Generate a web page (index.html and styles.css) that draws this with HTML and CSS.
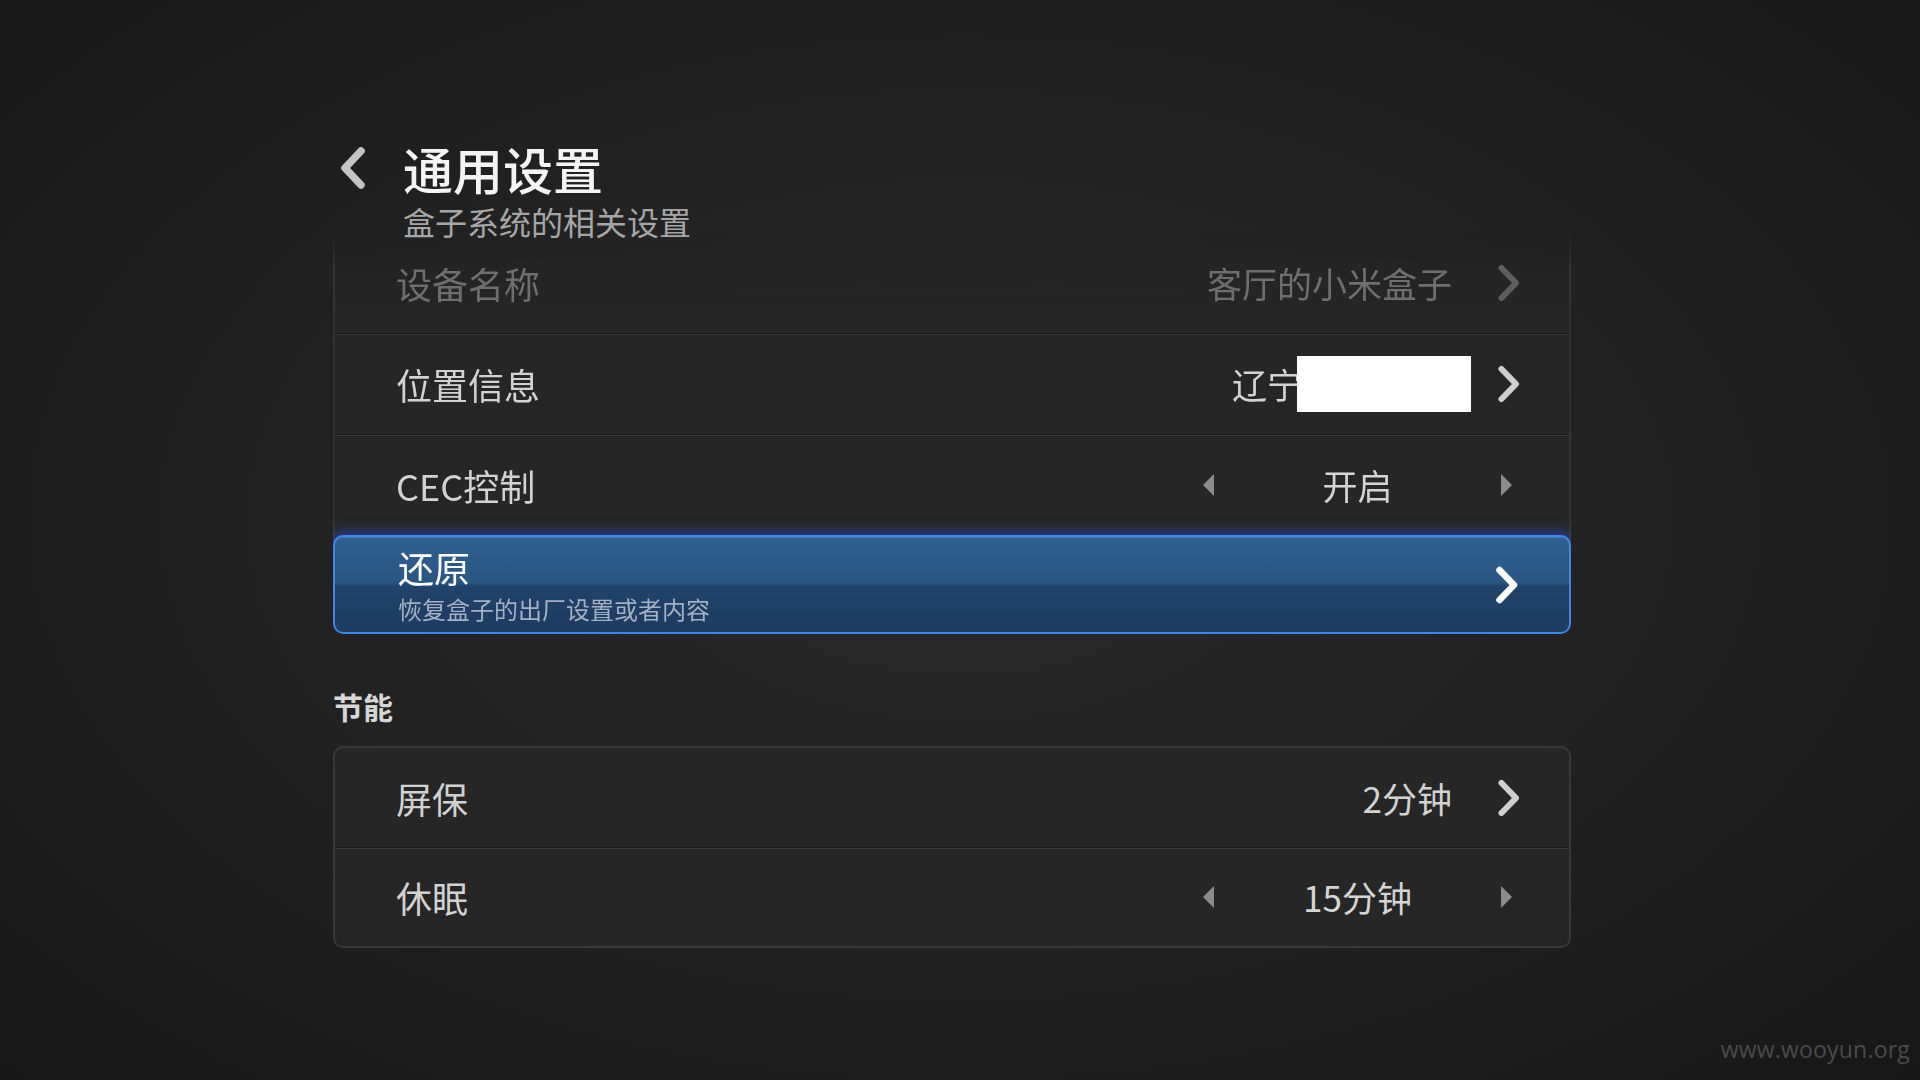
FILE: index.html
```html
<!DOCTYPE html>
<html lang="zh-CN">
<head>
<meta charset="utf-8">
<title>通用设置</title>
<link rel="stylesheet" href="styles.css">
</head>
<body>
<div class="screen">
  <header class="head">
    <svg class="back" viewBox="0 0 28 44" width="28" height="44"><path d="M22 5 L6 22 L22 39" fill="none" stroke="#c4c4c4" stroke-width="7.5" stroke-linecap="round" stroke-linejoin="round"/></svg>
    <div class="titles">
      <h1 class="title">通用设置</h1>
      <p class="subtitle">盒子系统的相关设置</p>
    </div>
  </header>

  <div class="card card-top">
    <div class="row dim">
      <span class="label">设备名称</span>
      <span class="value">客厅的小米盒子</span>
      <svg class="chev" viewBox="0 0 24 38" width="24" height="38"><path d="M4.5 4 L19 19 L4.5 34" fill="none" stroke="currentColor" stroke-width="6" stroke-linecap="round" stroke-linejoin="round"/></svg>
    </div>
    <div class="row">
      <span class="label">位置信息</span>
      <span class="value">辽宁<span class="redact"></span></span>
      <svg class="chev" viewBox="0 0 24 38" width="24" height="38"><path d="M4.5 4 L19 19 L4.5 34" fill="none" stroke="currentColor" stroke-width="6" stroke-linecap="round" stroke-linejoin="round"/></svg>
    </div>
    <div class="row">
      <span class="label">CEC控制</span>
      <div class="picker">
        <svg class="tri" viewBox="0 0 11 22" width="11" height="22"><path d="M11 0 L0 11 L11 22 Z" fill="currentColor"/></svg>
        <span class="pick-val">开启</span>
        <svg class="tri" viewBox="0 0 11 22" width="11" height="22"><path d="M0 0 L11 11 L0 22 Z" fill="currentColor"/></svg>
      </div>
    </div>
    <div class="row active">
      <div class="stack">
        <span class="label">还原</span>
        <span class="hint">恢复盒子的出厂设置或者内容</span>
      </div>
      <svg class="chev" viewBox="0 0 24 38" width="24" height="38"><path d="M4.5 4 L19 19 L4.5 34" fill="none" stroke="currentColor" stroke-width="6.5" stroke-linecap="round" stroke-linejoin="round"/></svg>
    </div>
  </div>

  <h2 class="section">节能</h2>

  <div class="card">
    <div class="row">
      <span class="label">屏保</span>
      <span class="value">2分钟</span>
      <svg class="chev" viewBox="0 0 24 38" width="24" height="38"><path d="M4.5 4 L19 19 L4.5 34" fill="none" stroke="currentColor" stroke-width="6" stroke-linecap="round" stroke-linejoin="round"/></svg>
    </div>
    <div class="row">
      <span class="label">休眠</span>
      <div class="picker">
        <svg class="tri" viewBox="0 0 11 22" width="11" height="22"><path d="M11 0 L0 11 L11 22 Z" fill="currentColor"/></svg>
        <span class="pick-val">15分钟</span>
        <svg class="tri" viewBox="0 0 11 22" width="11" height="22"><path d="M0 0 L11 11 L0 22 Z" fill="currentColor"/></svg>
      </div>
    </div>
  </div>

  <div class="watermark">www.wooyun.org</div>
</div>
</body>
</html>
```

FILE: styles.css
```css
* { box-sizing: border-box; }

html, body {
  margin: 0;
  padding: 0;
  width: 1920px;
  height: 1080px;
  overflow: hidden;
}

body {
  background: radial-gradient(ellipse 70% 75% at 50% 48%, #292929 0%, #232323 45%, #1b1b1b 80%, #171717 100%);
  font-family: "Noto Sans CJK SC", "Noto Sans", sans-serif;
  color: #d0d0d0;
}

.screen {
  position: relative;
  width: 1920px;
  height: 1080px;
  padding: 140px 0 0 333px;
}

.head {
  display: flex;
  align-items: flex-start;
  margin-bottom: -8px;
}

.back {
  margin: 6px 0 0 6px;
  flex: none;
}

.titles {
  margin-left: 36px;
}

.title {
  margin: 0;
  font-size: 50px;
  line-height: 56px;
  font-weight: 500;
  color: #f4f4f4;
}

.subtitle {
  margin: 5px 0 0 0;
  font-size: 32px;
  line-height: 40px;
  color: #a6a6a6;
}

.card {
  width: 1238px;
  background: #262626;
  border: 2px solid #383838;
  border-radius: 10px;
}

.card-top {
  border-top: none;
  border-bottom: none;
  border-radius: 0 0 10px 10px;
  background: linear-gradient(to bottom, rgba(38, 38, 38, 0) 0px, #262626 70px);
  border-left-color: #333;
  border-right-color: #333;
  -webkit-mask-image: linear-gradient(to bottom, transparent 0px, #000 32px);
  mask-image: linear-gradient(to bottom, transparent 0px, #000 32px);
}

.row {
  display: flex;
  align-items: center;
  height: 101px;
  padding: 0 48px 0 61px;
  border-top: 1px solid #1a1a1a;
  box-shadow: inset 0 1px 0 #3a3a3a;
  font-size: 36px;
  line-height: 44px;
}

.row:first-child {
  border-top: none;
  box-shadow: none;
}

.label {
  flex: 1;
  color: #d2d2d2;
}

.value {
  display: flex;
  align-items: center;
  color: #d2d2d2;
  margin-right: 45px;
  font-size: 35px;
}

.chev {
  flex: none;
  color: #cfcfcf;
}

.dim .label,
.dim .value {
  color: #6e6e6e;
}

.dim .chev {
  color: #5e5e5e;
}

.redact {
  display: block;
  width: 174px;
  height: 56px;
  background: #ffffff;
  margin-left: -5px;
  margin-right: -19px;
}

.picker {
  display: flex;
  align-items: center;
  justify-content: space-between;
  width: 309px;
  margin-right: 9px;
  font-size: 35px;
}

.tri {
  color: #8c8c8c;
}

.pick-val {
  color: #d4d4d4;
}

.row.active {
  height: 99px;
  margin: 0 -2px -2px -2px;
  padding-left: 63px;
  padding-right: 50px;
  border: 2px solid #3f86ea;
  border-radius: 10px;
  background: linear-gradient(to bottom, #2f6090 0%, #2a5682 48%, #21426a 52%, #1e3b60 100%);
  box-shadow: 0 0 12px 3px rgba(40, 90, 230, 0.6), inset 0 1px 0 rgba(120, 170, 230, 0.35);
}

.stack {
  flex: 1;
  display: flex;
  flex-direction: column;
}

.active .label {
  color: #ffffff;
  font-size: 36px;
  line-height: 42px;
}

.hint {
  margin-top: 6px;
  font-size: 24px;
  line-height: 30px;
  color: #a3b1c2;
}

.active .chev {
  color: #ffffff;
}

.section {
  margin: 54px 0 20px 0;
  font-size: 30px;
  line-height: 40px;
  font-weight: 700;
  color: #d6d6d6;
}

.card .row {
  height: 99px;
}

.card-top .row {
  height: 101px;
}

.card-top .row:first-child {
  height: 100px;
}

.card-top .row.active {
  height: 99px;
}

.watermark {
  position: absolute;
  right: 10px;
  bottom: 15px;
  font-family: "Open Sans", "Noto Sans", sans-serif;
  font-size: 23px;
  color: #4a4a4a;
  letter-spacing: 0.2px;
}
```
